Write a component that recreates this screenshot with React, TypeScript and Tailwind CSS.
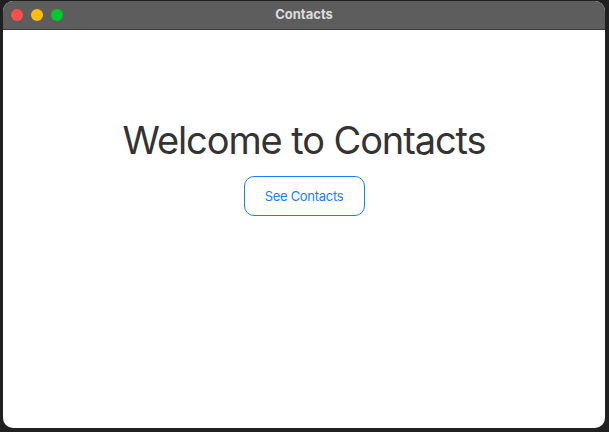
import React from "react";

export default function App() {
  return (
    <div className="w-[609px] h-[432px] bg-[#202020] pl-[3px] pr-[4px] pt-[1px] pb-[4px]" style={{ fontFamily: "Inter, 'Noto Sans', sans-serif" }}>
      <div className="w-full h-full rounded-[10px] overflow-hidden flex flex-col bg-white">
        <div className="h-[29px] shrink-0 bg-[#5d5d5d] border-b border-[#3a3a3a] relative flex items-center justify-center">
          <div className="absolute left-[8px] top-[8px] flex gap-[8px]">
            <div className="w-[12px] h-[12px] rounded-full bg-[#fe4f4c]" />
            <div className="w-[12px] h-[12px] rounded-full bg-[#fdbb0a]" />
            <div className="w-[12px] h-[12px] rounded-full bg-[#00ca2b]" />
          </div>
          <span className="text-[13px] font-bold text-[#dcdcdc]">Contacts</span>
        </div>
        <div className="flex-1 flex flex-col items-center pt-[87px]">
          <h1 className="text-[38px] leading-[46px] text-[#333333] font-normal tracking-[-1.1px]">Welcome to Contacts</h1>
          <button className="mt-[13px] w-[121px] h-[40px] rounded-[10px] border border-[#1a7ff5] text-[#1a7ff5] text-[13px] tracking-[-0.3px] pt-[1px] bg-white">
            See Contacts
          </button>
        </div>
      </div>
    </div>
  );
}
